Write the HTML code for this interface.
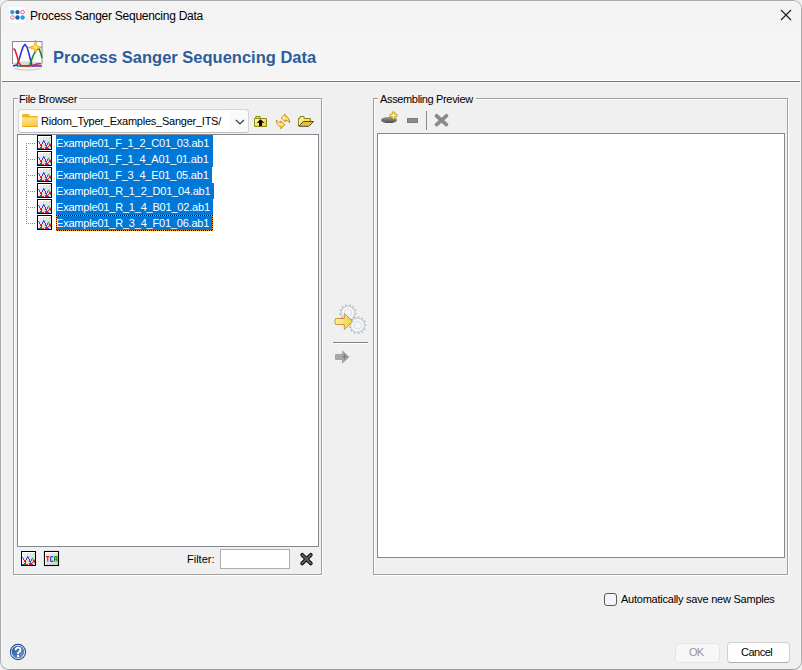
<!DOCTYPE html>
<html><head><meta charset="utf-8">
<style>
html,body{margin:0;padding:0;}
body{width:802px;height:670px;position:relative;overflow:hidden;background:#efefef;font-family:"Liberation Sans",sans-serif;font-size:11px;color:#000;}
.a{position:absolute;}
.win{left:0;top:0;width:800px;height:668px;border:1px solid #aaaaaa;border-bottom-color:#979797;border-radius:9px;background:#f0f0f0;overflow:hidden;}
.tb{left:0;top:0;width:800px;height:30px;background:#f3f3f3;}
.hdr{left:0;top:30px;width:800px;height:50px;background:#f5f5f5;}
.hline{left:0;top:79px;width:800px;height:1px;background:#fff;border-bottom:1px solid #787878;}
.hline2{left:0;top:81px;width:800px;height:1px;background:#f7f7f7;}
.t{position:absolute;white-space:nowrap;line-height:1;}
.grp{position:absolute;border-top:1px solid #a0a0a0;border-left:1px solid #a0a0a0;border-right:1px solid #fff;border-bottom:1px solid #fff;box-sizing:border-box;}
.grp2{position:absolute;border-top:1px solid #fff;border-left:1px solid #fff;border-right:1px solid #a0a0a0;border-bottom:1px solid #a0a0a0;box-sizing:border-box;}
.panel{position:absolute;background:#fff;border:1px solid #828790;box-sizing:border-box;}
.sel{position:absolute;background:#0078d7;height:16px;}
.row{position:absolute;left:56px;color:#fff;letter-spacing:-0.2px;}
</style></head><body>
<div class="a win">
  <div class="a tb"></div>
  <div class="a hdr"></div>
  <div class="a hline"></div>
  <div class="a hline2"></div>
  <div class="a" style="left:0;top:0;width:800px;height:668px;box-sizing:border-box;border:1px solid #f6f6f6;border-radius:8px;"></div>
</div>
<!-- title -->
<div class="t" style="left:30px;top:10px;font-size:12px;letter-spacing:-0.26px;">Process Sanger Sequencing Data</div>
<div class="t" style="left:53px;top:48.5px;font-size:16.5px;font-weight:bold;color:#2d5c9c;letter-spacing:0px;">Process Sanger Sequencing Data</div>

<!-- left group etched -->
<div class="a" style="left:14px;top:99px;width:309px;height:477px;box-sizing:border-box;border:1px solid #fff;"></div>
<div class="a" style="left:13px;top:98px;width:309px;height:477px;box-sizing:border-box;border:1px solid #a0a0a0;"></div>
<div class="a" style="left:18px;top:94px;width:61px;height:10px;background:#f0f0f0;"></div>
<div class="t" style="left:19px;top:94px;letter-spacing:-0.25px;">File Browser</div>

<!-- right group -->
<div class="a" style="left:374px;top:99px;width:415px;height:477px;box-sizing:border-box;border:1px solid #fff;"></div>
<div class="a" style="left:373px;top:98px;width:415px;height:477px;box-sizing:border-box;border:1px solid #a0a0a0;"></div>
<div class="a" style="left:378px;top:94px;width:98px;height:10px;background:#f0f0f0;"></div>
<div class="t" style="left:380px;top:94px;letter-spacing:-0.35px;">Assembling Preview</div>

<!-- combo -->
<div class="a" style="left:18px;top:109px;width:231px;height:24px;box-sizing:border-box;border:1px solid #d6d6d6;border-bottom-color:#bfbfbf;border-radius:3px;background:#fafafa;"></div>
<div class="a" style="left:20px;top:111px;width:209px;height:20px;background:#fff;"></div>
<div class="t" style="left:41px;top:116px;letter-spacing:-0.24px;">Ridom_Typer_Examples_Sanger_ITS/</div>

<!-- tree -->
<div class="panel" style="left:17px;top:134px;width:302px;height:413px;"></div>
<div class="sel" style="left:56px;top:135px;width:157px;"></div>
<div class="sel" style="left:56px;top:151px;width:157px;"></div>
<div class="sel" style="left:56px;top:167px;width:156px;"></div>
<div class="sel" style="left:56px;top:183px;width:158px;"></div>
<div class="sel" style="left:56px;top:199px;width:157px;"></div>
<div class="sel" style="left:56px;top:215px;width:157px;"></div>
<div class="row t" style="top:138px;">Example01_F_1_2_C01_03.ab1</div>
<div class="row t" style="top:154px;">Example01_F_1_4_A01_01.ab1</div>
<div class="row t" style="top:170px;">Example01_F_3_4_E01_05.ab1</div>
<div class="row t" style="top:186px;">Example01_R_1_2_D01_04.ab1</div>
<div class="row t" style="top:202px;">Example01_R_1_4_B01_02.ab1</div>
<div class="row t" style="top:218px;">Example01_R_3_4_F01_06.ab1</div>

<!-- preview -->
<div class="panel" style="left:377px;top:133px;width:408px;height:425px;"></div>

<!-- filter -->
<div class="t" style="left:187px;top:554px;">Filter:</div>
<div class="a" style="left:220px;top:549px;width:70px;height:20px;box-sizing:border-box;border:1px solid #abadb3;background:#fff;"></div>

<!-- checkbox -->
<div class="a" style="left:604px;top:593px;width:13px;height:13px;box-sizing:border-box;border:1px solid #5a5a5a;border-radius:3px;background:#f5f5f5;"></div>
<div class="t" style="left:621px;top:594px;letter-spacing:-0.24px;">Automatically save new Samples</div>

<!-- buttons -->
<div class="a" style="left:675px;top:643px;width:45px;height:20px;box-sizing:border-box;border:1px solid #e5e5e5;border-radius:4px;background:#f7f7f7;"></div>
<div class="t" style="left:689px;top:647px;color:#939393;letter-spacing:-0.9px;">OK</div>
<div class="a" style="left:727px;top:642px;width:63px;height:21px;box-sizing:border-box;border:1px solid #d0d0d0;border-bottom-color:#b0b0b0;border-radius:4px;background:#fefefe;"></div>
<div class="t" style="left:741px;top:647px;letter-spacing:-0.5px;">Cancel</div>

<svg class="a" style="left:0;top:0;" width="802" height="670" viewBox="0 0 802 670">
<defs>
 <linearGradient id="gfold" x1="0" y1="0" x2="0.3" y2="1"><stop offset="0" stop-color="#ffe79a"/><stop offset="1" stop-color="#f9c842"/></linearGradient>
 <linearGradient id="gchrom" x1="0" y1="0" x2="1" y2="1"><stop offset="0" stop-color="#f0f0f0"/><stop offset="1" stop-color="#d2d2d2"/></linearGradient>
 <linearGradient id="gplate" x1="0" y1="0" x2="0" y2="1"><stop offset="0" stop-color="#d8d8d8"/><stop offset="1" stop-color="#f4f4f4"/></linearGradient>
 <linearGradient id="gup" x1="0" y1="0" x2="1" y2="1"><stop offset="0" stop-color="#fffcd0"/><stop offset="0.5" stop-color="#f6e070"/><stop offset="1" stop-color="#e8c840"/></linearGradient>
 <linearGradient id="grf" x1="0" y1="0" x2="1" y2="1"><stop offset="0" stop-color="#fffbd8"/><stop offset="1" stop-color="#f4c640"/></linearGradient>
 <linearGradient id="garrow" x1="0" y1="0" x2="1" y2="0"><stop offset="0" stop-color="#f6f3a0"/><stop offset="1" stop-color="#f7cf3a"/></linearGradient>
 <radialGradient id="gstar" cx="0.5" cy="0.5" r="0.5"><stop offset="0" stop-color="#fff36a"/><stop offset="1" stop-color="#f0a810"/></radialGradient>
 <linearGradient id="ghelp" x1="0" y1="0" x2="1" y2="1"><stop offset="0" stop-color="#1c4e94"/><stop offset="1" stop-color="#7f9fc8"/></linearGradient>
 <linearGradient id="goval" x1="0" y1="0" x2="0" y2="1"><stop offset="0" stop-color="#9a9a9a"/><stop offset="1" stop-color="#4a4a4a"/></linearGradient>
 <g id="chrom">
  <rect x="0" y="0" width="15" height="15" fill="#000"/>
  <rect x="1" y="1" width="13" height="13" fill="#fff"/>
  <rect x="2" y="2" width="12" height="12" fill="url(#gchrom)"/>
  <g fill="#17901a"><rect x="3" y="13" width="1" height="1"/><rect x="4" y="13" width="1" height="1"/><rect x="8" y="12" width="1" height="1"/><rect x="9" y="11" width="1" height="1"/><rect x="9" y="10" width="1" height="1"/><rect x="10" y="9" width="1" height="1"/><rect x="10" y="8" width="1" height="1"/><rect x="11" y="7" width="1" height="1"/><rect x="12" y="8" width="1" height="1"/><rect x="12" y="9" width="1" height="1"/><rect x="13" y="10" width="1" height="1"/><rect x="13" y="11" width="1" height="1"/></g><g fill="#2a3ee6"><rect x="1" y="13" width="1" height="1"/><rect x="2" y="13" width="1" height="1"/><rect x="3" y="12" width="1" height="1"/><rect x="4" y="11" width="1" height="1"/><rect x="4" y="10" width="1" height="1"/><rect x="4" y="9" width="1" height="1"/><rect x="5" y="8" width="1" height="1"/><rect x="5" y="7" width="1" height="1"/><rect x="6" y="6" width="1" height="1"/><rect x="6" y="5" width="1" height="1"/><rect x="7" y="6" width="1" height="1"/><rect x="7" y="7" width="1" height="1"/><rect x="8" y="8" width="1" height="1"/><rect x="8" y="9" width="1" height="1"/><rect x="8" y="10" width="1" height="1"/><rect x="9" y="11" width="1" height="1"/><rect x="9" y="12" width="1" height="1"/><rect x="10" y="13" width="1" height="1"/><rect x="11" y="13" width="1" height="1"/></g><g fill="#ff1020"><rect x="1" y="6" width="1" height="1"/><rect x="2" y="7" width="1" height="1"/><rect x="2" y="8" width="1" height="1"/><rect x="3" y="9" width="1" height="1"/><rect x="3" y="10" width="1" height="1"/><rect x="4" y="11" width="1" height="1"/><rect x="4" y="12" width="1" height="1"/><rect x="5" y="13" width="1" height="1"/><rect x="6" y="13" width="1" height="1"/><rect x="8" y="13" width="1" height="1"/><rect x="9" y="13" width="1" height="1"/><rect x="10" y="12" width="1" height="1"/><rect x="11" y="11" width="1" height="1"/><rect x="12" y="10" width="1" height="1"/><rect x="13" y="9" width="1" height="1"/></g>
 </g>
</defs>
<!-- app icon -->
<rect x="9" y="7" width="16" height="16" fill="#fff"/>
<circle cx="12.3" cy="12.1" r="2.2" fill="#1aa3e8"/>
<circle cx="17.5" cy="12.1" r="2.2" fill="#1a5fa6"/>
<circle cx="22.6" cy="12.1" r="1.8" fill="none" stroke="#e8489a" stroke-width="0.9"/>
<circle cx="12.3" cy="17.5" r="1.8" fill="none" stroke="#e8489a" stroke-width="0.9"/>
<circle cx="17.5" cy="17.5" r="2.2" fill="#1a5fa6"/>
<circle cx="22.6" cy="17.5" r="2.2" fill="#1aa3e8"/>
<!-- close -->
<path d="M781 10L791 20M791 10L781 20" stroke="#1a1a1a" stroke-width="1.1"/>
<!-- header icon -->
<rect x="12.5" y="41.5" width="29.5" height="22" fill="#fff" stroke="#8a8a8a" stroke-width="1"/>
<ellipse cx="27.5" cy="68.2" rx="13.5" ry="2.6" fill="#d4d4d4"/>
<ellipse cx="27.5" cy="65.4" rx="15.8" ry="3.9" fill="#f6f6f6"/>
<ellipse cx="27.5" cy="64.4" rx="14.8" ry="3.1" fill="#d9d9d9"/>
<polyline points="13,66 17,65 19,60 21,53 23,47 25,44.5 27,47 29,54 31,62 32,66 42,66" fill="none" stroke="#2a3ad8" stroke-width="1.6"/>
<polyline points="17,66 29,66 31,62 33,56 36,50 39,48.5 41,54 42,58" fill="none" stroke="#1a8a2a" stroke-width="1.6"/>
<polyline points="13.5,48.5 15,50 17,56 19,63 21,65.5 29,66 33,65.5 37,64 41,63.5" fill="none" stroke="#e82030" stroke-width="1.6"/>
<path d="M35.5 40 L37 45.8 L42.8 47.5 L37 49.2 L35.5 53.6 L34 49.2 L28.2 47.5 L34 45.8 Z" fill="url(#gstar)" stroke="#e0901a" stroke-width="0.6"/>
<!-- combo folder -->
<path d="M22 115.5 Q22 114 23.5 114 L28.5 114 L30.5 116 L36.5 116 Q38 116 38 117.5 L38 118 L22 118 Z" fill="#f2b61c"/>
<path d="M22 117.5 L38 117.5 L38 125.5 Q38 127 36.5 127 L23.5 127 Q22 127 22 125.5 Z" fill="url(#gfold)"/>
<path d="M22.5 126.5 H37.5" stroke="#e8a820" stroke-width="1"/>
<!-- chevron -->
<polyline points="235.9,120 239.9,124 243.9,120" fill="none" stroke="#404040" stroke-width="1.2"/>
<!-- up folder -->
<path d="M255.8 118.5 V116.5 H260.2 V118.5" fill="#f4e67a" stroke="#8a8a10" stroke-width="1"/>
<path d="M254.5 126.5 V118.5 H266.5 V126.5 Z" fill="url(#gup)" stroke="#8a8a10" stroke-width="1"/>
<path d="M260.5 119.2 L264.3 122.8 H262 V126 H259 V122.8 H256.7 Z" fill="#000"/>
<!-- refresh -->
<path d="M281.2 118 L285.2 114 L285.2 116.1 Q289.4 116.9 289.8 122.8 Q287.8 120.5 285.2 120.2 L285.2 122 Z" fill="url(#grf)" stroke="#d58e10" stroke-width="1" stroke-linejoin="round"/>
<path d="M284.8 124.8 L280.8 128.8 L280.8 126.7 Q276.6 125.9 276.2 120 Q278.2 122.3 280.8 122.6 L280.8 120.8 Z" fill="url(#grf)" stroke="#d58e10" stroke-width="1" stroke-linejoin="round"/>
<!-- open folder -->
<path d="M298.5 126 V118.5 H300 V116.5 H304 V118.5 H310.5 V122" fill="url(#gup)" stroke="#8a8a10" stroke-width="1"/>
<path d="M299 126.3 L303.3 121.5 H313.7 L308.7 126.3 Z" fill="#e6c23c" stroke="#4d4a30" stroke-width="1" stroke-linejoin="round"/>
<!-- tree dotted lines -->
<g fill="#8a8a8a">
<rect x="26" y="143" width="1" height="1"/><rect x="26" y="145" width="1" height="1"/><rect x="26" y="147" width="1" height="1"/><rect x="26" y="149" width="1" height="1"/><rect x="26" y="151" width="1" height="1"/><rect x="26" y="153" width="1" height="1"/><rect x="26" y="155" width="1" height="1"/><rect x="26" y="157" width="1" height="1"/><rect x="26" y="159" width="1" height="1"/><rect x="26" y="161" width="1" height="1"/><rect x="26" y="163" width="1" height="1"/><rect x="26" y="165" width="1" height="1"/><rect x="26" y="167" width="1" height="1"/><rect x="26" y="169" width="1" height="1"/><rect x="26" y="171" width="1" height="1"/><rect x="26" y="173" width="1" height="1"/><rect x="26" y="175" width="1" height="1"/><rect x="26" y="177" width="1" height="1"/><rect x="26" y="179" width="1" height="1"/><rect x="26" y="181" width="1" height="1"/><rect x="26" y="183" width="1" height="1"/><rect x="26" y="185" width="1" height="1"/><rect x="26" y="187" width="1" height="1"/><rect x="26" y="189" width="1" height="1"/><rect x="26" y="191" width="1" height="1"/><rect x="26" y="193" width="1" height="1"/><rect x="26" y="195" width="1" height="1"/><rect x="26" y="197" width="1" height="1"/><rect x="26" y="199" width="1" height="1"/><rect x="26" y="201" width="1" height="1"/><rect x="26" y="203" width="1" height="1"/><rect x="26" y="205" width="1" height="1"/><rect x="26" y="207" width="1" height="1"/><rect x="26" y="209" width="1" height="1"/><rect x="26" y="211" width="1" height="1"/><rect x="26" y="213" width="1" height="1"/><rect x="26" y="215" width="1" height="1"/><rect x="26" y="217" width="1" height="1"/><rect x="26" y="219" width="1" height="1"/><rect x="26" y="221" width="1" height="1"/><rect x="26" y="223" width="1" height="1"/><rect x="28" y="143" width="1" height="1"/><rect x="30" y="143" width="1" height="1"/><rect x="32" y="143" width="1" height="1"/><rect x="34" y="143" width="1" height="1"/><rect x="28" y="159" width="1" height="1"/><rect x="30" y="159" width="1" height="1"/><rect x="32" y="159" width="1" height="1"/><rect x="34" y="159" width="1" height="1"/><rect x="28" y="175" width="1" height="1"/><rect x="30" y="175" width="1" height="1"/><rect x="32" y="175" width="1" height="1"/><rect x="34" y="175" width="1" height="1"/><rect x="28" y="191" width="1" height="1"/><rect x="30" y="191" width="1" height="1"/><rect x="32" y="191" width="1" height="1"/><rect x="34" y="191" width="1" height="1"/><rect x="28" y="207" width="1" height="1"/><rect x="30" y="207" width="1" height="1"/><rect x="32" y="207" width="1" height="1"/><rect x="34" y="207" width="1" height="1"/><rect x="28" y="223" width="1" height="1"/><rect x="30" y="223" width="1" height="1"/><rect x="32" y="223" width="1" height="1"/><rect x="34" y="223" width="1" height="1"/></g>
<use href="#chrom" x="37" y="135"/>
<use href="#chrom" x="37" y="151"/>
<use href="#chrom" x="37" y="167"/>
<use href="#chrom" x="37" y="183"/>
<use href="#chrom" x="37" y="199"/>
<use href="#chrom" x="37" y="215"/>

<!-- focus dotted border on last row -->
<rect x="56.5" y="215.5" width="156" height="15" fill="none" stroke="#000" stroke-width="1"/>
<g fill="#ff9326"><rect x="56" y="216" width="1" height="1"/><rect x="56" y="218" width="1" height="1"/><rect x="56" y="220" width="1" height="1"/><rect x="56" y="222" width="1" height="1"/><rect x="56" y="224" width="1" height="1"/><rect x="56" y="226" width="1" height="1"/><rect x="56" y="228" width="1" height="1"/><rect x="56" y="230" width="1" height="1"/><rect x="57" y="215" width="1" height="1"/><rect x="58" y="230" width="1" height="1"/><rect x="59" y="215" width="1" height="1"/><rect x="60" y="230" width="1" height="1"/><rect x="61" y="215" width="1" height="1"/><rect x="62" y="230" width="1" height="1"/><rect x="63" y="215" width="1" height="1"/><rect x="64" y="230" width="1" height="1"/><rect x="65" y="215" width="1" height="1"/><rect x="66" y="230" width="1" height="1"/><rect x="67" y="215" width="1" height="1"/><rect x="68" y="230" width="1" height="1"/><rect x="69" y="215" width="1" height="1"/><rect x="70" y="230" width="1" height="1"/><rect x="71" y="215" width="1" height="1"/><rect x="72" y="230" width="1" height="1"/><rect x="73" y="215" width="1" height="1"/><rect x="74" y="230" width="1" height="1"/><rect x="75" y="215" width="1" height="1"/><rect x="76" y="230" width="1" height="1"/><rect x="77" y="215" width="1" height="1"/><rect x="78" y="230" width="1" height="1"/><rect x="79" y="215" width="1" height="1"/><rect x="80" y="230" width="1" height="1"/><rect x="81" y="215" width="1" height="1"/><rect x="82" y="230" width="1" height="1"/><rect x="83" y="215" width="1" height="1"/><rect x="84" y="230" width="1" height="1"/><rect x="85" y="215" width="1" height="1"/><rect x="86" y="230" width="1" height="1"/><rect x="87" y="215" width="1" height="1"/><rect x="88" y="230" width="1" height="1"/><rect x="89" y="215" width="1" height="1"/><rect x="90" y="230" width="1" height="1"/><rect x="91" y="215" width="1" height="1"/><rect x="92" y="230" width="1" height="1"/><rect x="93" y="215" width="1" height="1"/><rect x="94" y="230" width="1" height="1"/><rect x="95" y="215" width="1" height="1"/><rect x="96" y="230" width="1" height="1"/><rect x="97" y="215" width="1" height="1"/><rect x="98" y="230" width="1" height="1"/><rect x="99" y="215" width="1" height="1"/><rect x="100" y="230" width="1" height="1"/><rect x="101" y="215" width="1" height="1"/><rect x="102" y="230" width="1" height="1"/><rect x="103" y="215" width="1" height="1"/><rect x="104" y="230" width="1" height="1"/><rect x="105" y="215" width="1" height="1"/><rect x="106" y="230" width="1" height="1"/><rect x="107" y="215" width="1" height="1"/><rect x="108" y="230" width="1" height="1"/><rect x="109" y="215" width="1" height="1"/><rect x="110" y="230" width="1" height="1"/><rect x="111" y="215" width="1" height="1"/><rect x="112" y="230" width="1" height="1"/><rect x="113" y="215" width="1" height="1"/><rect x="114" y="230" width="1" height="1"/><rect x="115" y="215" width="1" height="1"/><rect x="116" y="230" width="1" height="1"/><rect x="117" y="215" width="1" height="1"/><rect x="118" y="230" width="1" height="1"/><rect x="119" y="215" width="1" height="1"/><rect x="120" y="230" width="1" height="1"/><rect x="121" y="215" width="1" height="1"/><rect x="122" y="230" width="1" height="1"/><rect x="123" y="215" width="1" height="1"/><rect x="124" y="230" width="1" height="1"/><rect x="125" y="215" width="1" height="1"/><rect x="126" y="230" width="1" height="1"/><rect x="127" y="215" width="1" height="1"/><rect x="128" y="230" width="1" height="1"/><rect x="129" y="215" width="1" height="1"/><rect x="130" y="230" width="1" height="1"/><rect x="131" y="215" width="1" height="1"/><rect x="132" y="230" width="1" height="1"/><rect x="133" y="215" width="1" height="1"/><rect x="134" y="230" width="1" height="1"/><rect x="135" y="215" width="1" height="1"/><rect x="136" y="230" width="1" height="1"/><rect x="137" y="215" width="1" height="1"/><rect x="138" y="230" width="1" height="1"/><rect x="139" y="215" width="1" height="1"/><rect x="140" y="230" width="1" height="1"/><rect x="141" y="215" width="1" height="1"/><rect x="142" y="230" width="1" height="1"/><rect x="143" y="215" width="1" height="1"/><rect x="144" y="230" width="1" height="1"/><rect x="145" y="215" width="1" height="1"/><rect x="146" y="230" width="1" height="1"/><rect x="147" y="215" width="1" height="1"/><rect x="148" y="230" width="1" height="1"/><rect x="149" y="215" width="1" height="1"/><rect x="150" y="230" width="1" height="1"/><rect x="151" y="215" width="1" height="1"/><rect x="152" y="230" width="1" height="1"/><rect x="153" y="215" width="1" height="1"/><rect x="154" y="230" width="1" height="1"/><rect x="155" y="215" width="1" height="1"/><rect x="156" y="230" width="1" height="1"/><rect x="157" y="215" width="1" height="1"/><rect x="158" y="230" width="1" height="1"/><rect x="159" y="215" width="1" height="1"/><rect x="160" y="230" width="1" height="1"/><rect x="161" y="215" width="1" height="1"/><rect x="162" y="230" width="1" height="1"/><rect x="163" y="215" width="1" height="1"/><rect x="164" y="230" width="1" height="1"/><rect x="165" y="215" width="1" height="1"/><rect x="166" y="230" width="1" height="1"/><rect x="167" y="215" width="1" height="1"/><rect x="168" y="230" width="1" height="1"/><rect x="169" y="215" width="1" height="1"/><rect x="170" y="230" width="1" height="1"/><rect x="171" y="215" width="1" height="1"/><rect x="172" y="230" width="1" height="1"/><rect x="173" y="215" width="1" height="1"/><rect x="174" y="230" width="1" height="1"/><rect x="175" y="215" width="1" height="1"/><rect x="176" y="230" width="1" height="1"/><rect x="177" y="215" width="1" height="1"/><rect x="178" y="230" width="1" height="1"/><rect x="179" y="215" width="1" height="1"/><rect x="180" y="230" width="1" height="1"/><rect x="181" y="215" width="1" height="1"/><rect x="182" y="230" width="1" height="1"/><rect x="183" y="215" width="1" height="1"/><rect x="184" y="230" width="1" height="1"/><rect x="185" y="215" width="1" height="1"/><rect x="186" y="230" width="1" height="1"/><rect x="187" y="215" width="1" height="1"/><rect x="188" y="230" width="1" height="1"/><rect x="189" y="215" width="1" height="1"/><rect x="190" y="230" width="1" height="1"/><rect x="191" y="215" width="1" height="1"/><rect x="192" y="230" width="1" height="1"/><rect x="193" y="215" width="1" height="1"/><rect x="194" y="230" width="1" height="1"/><rect x="195" y="215" width="1" height="1"/><rect x="196" y="230" width="1" height="1"/><rect x="197" y="215" width="1" height="1"/><rect x="198" y="230" width="1" height="1"/><rect x="199" y="215" width="1" height="1"/><rect x="200" y="230" width="1" height="1"/><rect x="201" y="215" width="1" height="1"/><rect x="202" y="230" width="1" height="1"/><rect x="203" y="215" width="1" height="1"/><rect x="204" y="230" width="1" height="1"/><rect x="205" y="215" width="1" height="1"/><rect x="206" y="230" width="1" height="1"/><rect x="207" y="215" width="1" height="1"/><rect x="208" y="230" width="1" height="1"/><rect x="209" y="215" width="1" height="1"/><rect x="210" y="230" width="1" height="1"/><rect x="211" y="215" width="1" height="1"/><rect x="212" y="216" width="1" height="1"/><rect x="212" y="218" width="1" height="1"/><rect x="212" y="220" width="1" height="1"/><rect x="212" y="222" width="1" height="1"/><rect x="212" y="224" width="1" height="1"/><rect x="212" y="226" width="1" height="1"/><rect x="212" y="228" width="1" height="1"/><rect x="212" y="230" width="1" height="1"/></g>
<!-- bottom icons -->
<use href="#chrom" x="21" y="551"/>
<rect x="44.5" y="551.5" width="14" height="14" fill="url(#gchrom)" stroke="#000" stroke-width="1.1"/>
<path d="M45 552.5H58 M45.5 552V565" stroke="#fff" stroke-width="1"/>
<path d="M46 556.6H49.4 M47.7 556.6V561.6" stroke="#f01020" stroke-width="1.1"/>
<path d="M53.2 556.6H51.6 Q50.6 556.6 50.6 557.6 V560.4 Q50.6 561.4 51.6 561.4 H53.2" fill="none" stroke="#2038e0" stroke-width="1.1"/>
<path d="M54.6 561.8V557.4 Q54.6 556.6 55.4 556.6 H56.2 Q57 556.6 57 557.4 V561.8 M54.6 559.2H57" fill="none" stroke="#108010" stroke-width="1.1"/>
<!-- filter X -->
<path d="M302.2 554.8 L310.8 563.4 M310.8 554.8 L302.2 563.4" stroke="#111" stroke-width="3.8" stroke-linecap="round"/>
<path d="M302.2 554.8 L310.8 563.4 M310.8 554.8 L302.2 563.4" stroke="#5e5e5e" stroke-width="1.9" stroke-linecap="round"/>
<!-- preview toolbar -->
<ellipse cx="389" cy="120" rx="8" ry="3.1" fill="url(#goval)"/>
<path d="M392.3 112 H394.7 V114.3 H397 V116.7 H394.7 V119 H392.3 V116.7 H390 V114.3 H392.3 Z" fill="#fff6b0" stroke="#b8961a" stroke-width="0.9" stroke-linejoin="round"/>
<rect x="407.5" y="118.5" width="10" height="4" fill="#8c8c8c" stroke="#7a7a7a" stroke-width="1"/>
<rect x="426" y="111" width="1" height="19" fill="#8a8a8a"/>
<path d="M436.6 115.8 L446.4 124.6 M446.4 115.8 L436.6 124.6" stroke="#8a8a8a" stroke-width="3.8" stroke-linecap="round"/>
<!-- gears -->
<g fill="#f7f8f9" stroke="#a0abb6" stroke-width="0.75" stroke-linejoin="miter"><polygon points="354.34,312.10 354.39,312.71 356.66,313.87 354.21,314.55 354.03,315.14 353.79,315.72 355.26,317.79 352.78,317.26 352.34,317.70 351.87,318.10 352.20,320.62 350.25,318.99 349.66,319.18 349.06,319.31 348.18,321.70 347.21,319.35 346.60,319.24 346.00,319.08 344.12,320.79 344.35,318.25 343.86,317.88 343.41,317.46 340.94,318.09 342.32,315.96 342.06,315.39 341.86,314.81 339.39,314.23 341.60,312.98 341.63,312.36 341.72,311.75 339.80,310.09 342.34,310.01 342.66,309.47 343.02,308.98 342.10,306.61 344.38,307.72 344.91,307.40 345.46,307.12 345.74,304.60 347.25,306.64 347.87,306.60 348.48,306.62 349.91,304.51 350.29,307.02 350.86,307.27 351.40,307.57 353.63,306.37 352.80,308.77 353.19,309.26 353.53,309.77 356.07,309.75 354.22,311.49"/><circle cx="348" cy="313" r="3.8" fill="#f4f4f4" stroke="#d0d6dc"/><polygon points="363.91,323.62 364.03,324.25 366.40,325.20 364.03,326.15 363.91,326.78 363.73,327.39 365.38,329.34 362.84,329.08 362.44,329.58 361.99,330.03 362.56,332.52 360.43,331.12 359.84,331.37 359.23,331.57 358.57,334.04 357.34,331.80 356.70,331.75 356.08,331.64 354.34,333.52 354.29,330.97 353.75,330.63 353.24,330.24 350.84,331.10 351.98,328.82 351.66,328.27 351.39,327.69 348.86,327.33 350.93,325.84 350.90,325.20 350.93,324.56 348.86,323.07 351.39,322.71 351.66,322.13 351.98,321.58 350.84,319.30 353.24,320.16 353.75,319.77 354.29,319.43 354.34,316.88 356.08,318.76 356.70,318.65 357.34,318.60 358.57,316.36 359.23,318.83 359.84,319.03 360.43,319.28 362.56,317.88 361.99,320.37 362.44,320.82 362.84,321.32 365.38,321.06 363.73,323.01"/><circle cx="357.5" cy="325.2" r="4" fill="#f4f4f4" stroke="#d0d6dc"/></g>
<path d="M335.5 318.5 H344.3 V313.5 L352.7 321.5 L344.3 329.5 V324.5 H335.5 Q334.2 321.5 335.5 318.5 Z" fill="url(#garrow)" stroke="#c98a34" stroke-width="0.9"/>
<rect x="333" y="342" width="35" height="1" fill="#808080"/>
<rect x="333" y="343" width="35" height="1" fill="#ffffff"/>
<!-- gray arrow -->
<path d="M335.5 354.5 H342.5 V351 L349 357 L342.5 363 V359.5 H335.5 Z" fill="#a8a8a8" stroke="#9a9a9a" stroke-width="0.8"/>
<path d="M344.5 354 V359.5 M342 356.8 H347.2" stroke="#787878" stroke-width="1.1"/>
<!-- help -->
<circle cx="18" cy="652" r="7.6" fill="#fff" stroke="#1f4f94" stroke-width="1.1"/>
<circle cx="18" cy="652" r="6.3" fill="url(#ghelp)"/>
<path d="M15.6 650.2 Q15.6 647.6 18 647.6 Q20.4 647.6 20.4 649.9 Q20.4 651.2 18.9 652.1 Q18 652.7 18 654" fill="none" stroke="#fff" stroke-width="1.8"/>
<rect x="17" y="655" width="2" height="2" fill="#fff"/>
</svg>
</body></html>
